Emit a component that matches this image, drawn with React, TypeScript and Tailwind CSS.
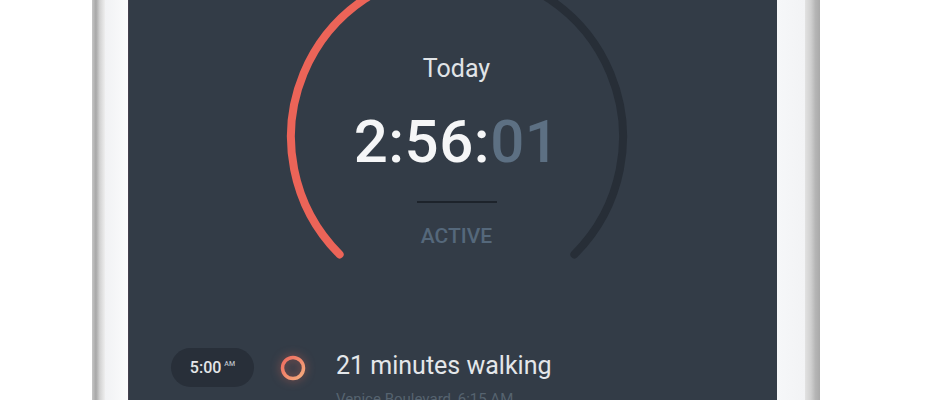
import React from "react";

function Gauge() {
  return (
    <svg
      width="350"
      height="350"
      viewBox="0 0 350 350"
      className="absolute left-[153px] top-[-38px]"
    >
      <path
        d="M 57.6 292.4 A 166 166 0 0 1 175 9"
        fill="none"
        stroke="#ec6458"
        strokeWidth="8"
        strokeLinecap="round"
      />
      <path
        d="M 175 9 A 166 166 0 0 1 292.4 292.4"
        fill="none"
        stroke="#272e37"
        strokeWidth="8"
        strokeLinecap="round"
      />
    </svg>
  );
}

function Ring() {
  return (
    <svg
      width="28"
      height="28"
      viewBox="0 0 28 28"
      className="drop-shadow-[0_0_5px_rgba(240,110,90,0.55)]"
    >
      <defs>
        <linearGradient id="ring" x1="0" y1="0" x2="1" y2="1">
          <stop offset="0%" stopColor="#ee6a5e" />
          <stop offset="100%" stopColor="#f6ad7e" />
        </linearGradient>
      </defs>
      <circle cx="14" cy="14" r="10.5" fill="none" stroke="url(#ring)" strokeWidth="3.5" />
    </svg>
  );
}

export default function App() {
  return (
    <div className="w-[940px] h-[400px] bg-white overflow-hidden font-['Roboto',sans-serif]">
      <div className="ml-[92px] w-[728px] h-full flex">
        <div className="w-[13px] h-full bg-[linear-gradient(to_right,#c6c6c6,#a7a7a7_30%,#d2d2d2_60%,#eeeeee)]" />
        <div className="w-[23px] h-full bg-[linear-gradient(to_right,#f1f2f4,#fbfbfc)]" />
        <div className="relative w-[649px] h-full bg-[#333c47] overflow-hidden border-l border-[#45404f]">
          <Gauge />
          <div className="relative flex flex-col items-center pl-[7px]">
            <div className="mt-[55px] text-[25px] leading-[28px] text-[#e1e4e7]">Today</div>
            <div className="mt-[29px] text-[60px] leading-[60px] font-medium text-[#f5f6f7] tracking-[0.5px]">
              2:56:<span className="text-[#5d7083]">01</span>
            </div>
            <div className="mt-[29px] h-[2px] w-[80px] bg-[#1d232b]" />
            <div className="mt-[21px] text-[21px] leading-[24px] font-medium text-[#55687b]">ACTIVE</div>
          </div>
          <div className="relative mt-[100px] flex items-start">
            <div className="ml-[42px] h-[39px] w-[83px] rounded-full bg-[#282f39] flex items-center justify-center">
              <span className="text-[16px] font-medium text-[#e4e6e9]">5:00</span>
              <span className="ml-[3px] mb-[6px] text-[7px] font-medium text-[#b9bfc6]">AM</span>
            </div>
            <div className="ml-[25px] h-[39px] flex items-center">
              <Ring />
            </div>
            <div className="ml-[29px] mt-[4px] flex flex-col">
              <div className="text-[25px] leading-[28px] text-[#e4e7ea]">21 minutes walking</div>
              <div className="mt-[9px] text-[15px] leading-[20px] text-[#56636f]">
                Venice Boulevard, 6:15 AM
              </div>
            </div>
          </div>
        </div>
        <div className="w-[28px] h-full bg-[linear-gradient(to_right,#f6f7f9,#f2f3f5)]" />
        <div className="w-[15px] h-full bg-[linear-gradient(to_right,#e2e2e2,#cfcfcf_40%,#b5b5b5_70%,#a9a9a9)]" />
      </div>
    </div>
  );
}
